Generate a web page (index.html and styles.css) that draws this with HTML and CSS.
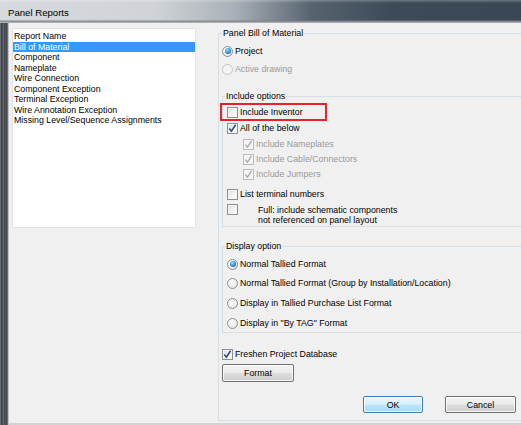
FILE: index.html
```html
<!DOCTYPE html>
<html>
<head>
<meta charset="utf-8">
<title>Panel Reports</title>
<link rel="stylesheet" href="styles.css">
</head>
<body>
<div class="window">
  <div class="titlebar"><span class="title">Panel Reports</span></div>
  <div class="frame">
    <div class="frame-left"></div>
    <div class="client">
      <div class="listbox">
        <div class="list-header">Report Name</div>
        <div class="item selected">Bill of Material</div>
        <div class="item">Component</div>
        <div class="item">Nameplate</div>
        <div class="item">Wire Connection</div>
        <div class="item">Component Exception</div>
        <div class="item">Terminal Exception</div>
        <div class="item">Wire Annotation Exception</div>
        <div class="item">Missing Level/Sequence Assignments</div>
      </div>

      <fieldset class="group outer">
        <legend>Panel Bill of Material</legend>
        <div class="row r-project"><span class="radio on"></span><span>Project</span></div>
        <div class="row r-active disabled"><span class="radio"></span><span>Active drawing</span></div>

        <fieldset class="group include">
          <legend>Include options</legend>
          <div class="row r-inventor"><span class="cb"></span><span>Include Inventor</span></div>
          <div class="row r-all"><span class="cb checked"><svg viewBox="0 0 11 11" width="11" height="11"><path d="M2.3 5.6 L4.4 8.2 L8.6 1.8" fill="none" stroke="#334a86" stroke-width="1.6"/></svg></span><span>All of the below</span></div>
          <div class="row sub sub-first disabled"><span class="cb checked dis"><svg viewBox="0 0 11 11" width="11" height="11"><path d="M2.3 5.6 L4.4 8.2 L8.6 1.8" fill="none" stroke="#a9a9a9" stroke-width="1.3"/></svg></span><span>Include Nameplates</span></div>
          <div class="row sub disabled"><span class="cb checked dis"><svg viewBox="0 0 11 11" width="11" height="11"><path d="M2.3 5.6 L4.4 8.2 L8.6 1.8" fill="none" stroke="#a9a9a9" stroke-width="1.3"/></svg></span><span>Include Cable/Connectors</span></div>
          <div class="row sub disabled"><span class="cb checked dis"><svg viewBox="0 0 11 11" width="11" height="11"><path d="M2.3 5.6 L4.4 8.2 L8.6 1.8" fill="none" stroke="#a9a9a9" stroke-width="1.3"/></svg></span><span>Include Jumpers</span></div>
          <div class="row r-list"><span class="cb"></span><span>List terminal numbers</span></div>
          <div class="row r-full"><span class="cb"></span><span class="full-text">Full: include schematic components<br>not referenced on panel layout</span></div>
        </fieldset>

        <fieldset class="group display">
          <legend>Display option</legend>
          <div class="row r-disp r-disp-first"><span class="radio on"></span><span>Normal Tallied Format</span></div>
          <div class="row r-disp"><span class="radio"></span><span>Normal Tallied Format (Group by Installation/Location)</span></div>
          <div class="row r-disp r-disp-b"><span class="radio"></span><span>Display in Tallied Purchase List Format</span></div>
          <div class="row r-disp r-disp-b"><span class="radio"></span><span>Display in "By TAG" Format</span></div>
        </fieldset>

        <div class="row r-freshen"><span class="cb checked"><svg viewBox="0 0 11 11" width="11" height="11"><path d="M2.3 5.6 L4.4 8.2 L8.6 1.8" fill="none" stroke="#334a86" stroke-width="1.6"/></svg></span><span>Freshen Project Database</span></div>
        <button class="btn format">Format</button>
        <div class="actions">
          <button class="btn ok">OK</button>
          <button class="btn cancel">Cancel</button>
        </div>
      </fieldset>
    </div>
  </div>
</div>
</body>
</html>
```
FILE: styles.css
```css
* { box-sizing: border-box; }
html, body { margin: 0; padding: 0; }
body {
  width: 521px;
  height: 425px;
  overflow: hidden;
  background: #f0f0f0;
  font-family: "Liberation Sans", Arial, sans-serif;
  font-size: 8.8px;
  color: #000;
}
.window {
  width: 521px;
  height: 425px;
  display: flex;
  flex-direction: column;
  overflow: hidden;
  background: #6b7580;
}
.titlebar {
  height: 23px;
  flex: none;
  display: flex;
  align-items: center;
  padding-left: 8px;
  background:
    linear-gradient(to bottom, rgba(255,255,255,0.25) 0, rgba(255,255,255,0) 3px, rgba(0,0,0,0) 20px, rgba(120,125,130,0.9) 21px, #b9bec3 23px),
    linear-gradient(to right, #d7dadd 0, #cfd3d7 30%, #a9b0b7 45%, #56636f 60%, #3d4b59 75%, #3a4856 100%);
}
.title {
  font-family: "Liberation Sans", Arial, sans-serif;
  font-size: 9.6px;
  color: #000;
  margin-top: 1px;
}
.frame {
  flex: 1;
  display: flex;
  min-height: 0;
}
.frame-left {
  width: 9px;
  flex: none;
  background: linear-gradient(to right, #8d9197 0, #4a4f55 1px, #2f3338 2px, #6c7178 3px, #3b3f44 5px, #5d6268 6px, #2c3035 7px, #a6aab0 8px, #d7d9db 9px);
}
.client {
  flex: 1;
  display: flex;
  align-items: flex-start;
  background: #f0f0f0;
  border-bottom: 2px solid #d0d2d4;
  min-width: 0;
  overflow: hidden;
}

/* list box */
.listbox {
  flex: none;
  width: 184px;
  height: 200px;
  margin: 5px 0 0 3px;
  background: #fff;
  border: 1px solid #e1e4e7;
  padding-top: 1px;
}
.list-header, .item {
  height: 10.5px;
  line-height: 10.5px;
  padding-left: 1px;
  white-space: nowrap;
}
.list-header { height: 11.5px; line-height: 12px; }
.item.selected { background: #3399ff; color: #fff; }

/* group boxes */
.group {
  margin: 0;
  padding: 0;
  min-width: 0;
  border: 1px solid #d5dfe5;
  border-right: none;
}
.group legend {
  padding: 0 1px;
  line-height: 12px;
  height: 12px;
  font-size: 8.8px;
  white-space: nowrap;
}
.outer {
  flex: none;
  width: 330px;
  margin: 4px 0 0 22px;
  padding-bottom: 7px;
}
.outer > legend { margin-left: 3px; }
.include, .display {
  margin-left: 3px;
  width: 320px;
}
.include > legend, .display > legend { margin-left: 2px; }

.row {
  display: flex;
  align-items: center;
  height: 12px;
  white-space: nowrap;
}
.row .radio, .row .cb { margin-right: 2px; }
.disabled { color: #9a9a9a; }

.r-project { margin: 6px 0 0 3px; }
.r-active { margin: 6px 0 0 3px; }

.include { margin-top: 15px; padding-bottom: 1px; }
.r-inventor {
  margin: 4px 0 0 0;
  width: 101px;
  padding-left: 4px;
  outline: 2px solid #e3242b;
  outline-offset: 1px;
}
.r-all { margin: 4px 0 0 4px; }
.sub { margin: 3px 0 0 20px; }
.sub-first { margin-top: 4px; }
.r-list { margin: 8px 0 0 4px; }
.r-full {
  margin: 4px 0 0 4px;
  height: auto;
  align-items: flex-start;
}
.full-text {
  margin-left: 18px;
  margin-top: 1px;
  line-height: 10px;
}

.display { margin-top: 13px; padding-bottom: 3px; }
.r-disp { margin: 7px 0 0 4px; }
.r-disp-first { margin-top: 6px; }
.r-disp-b { margin-top: 8px; }

.r-freshen { margin: 15px 0 0 3px; }

/* checkbox / radio */
.cb {
  width: 11px;
  height: 11px;
  flex: none;
  border: 1px solid #8e8f8f;
  background: linear-gradient(135deg, #dcdcdc 0, #f4f4f4 60%, #fdfdfd 100%);
  box-shadow: inset 0 0 0 1px #f4f4f4;
  display: block;
}
.cb svg { display: block; margin: -1px 0 0 -1px; }
.cb.dis { border-color: #bcbcbc; background: #f4f4f4; }
.radio {
  width: 11px;
  height: 11px;
  flex: none;
  border-radius: 50%;
  border: 1px solid #8e8f8f;
  background: radial-gradient(circle at 35% 35%, #ffffff 0, #e8e8e8 70%, #d5d5d5 100%);
  display: flex;
  align-items: center;
  justify-content: center;
}
.radio.on::after {
  content: "";
  width: 6px;
  height: 6px;
  border-radius: 50%;
  background: radial-gradient(circle at 40% 35%, #9fe3ff 0, #2a8ad4 55%, #0c4f96 100%);
}
.disabled .radio { border-color: #c5c5c5; background: #f4f4f4; }

/* buttons */
.btn {
  display: block;
  font-family: "Liberation Sans", Arial, sans-serif;
  font-size: 8.8px;
  color: #000;
  padding: 0;
  border: 1px solid #707070;
  border-radius: 2px;
  background: linear-gradient(to bottom, #f3f3f3 0, #ebebeb 48%, #dddddd 52%, #cfcfcf 100%);
  box-shadow: inset 0 0 0 1px rgba(255,255,255,0.8);
}
.format {
  width: 72px;
  height: 18px;
  margin: 4px 0 0 3px;
}
.actions {
  display: flex;
  gap: 22px;
  margin: 14px 0 0 144px;
}
.ok {
  width: 60px;
  height: 17px;
  border-color: #3c7fb1;
  background: linear-gradient(to bottom, #eaf6fd 0, #d9f0fc 48%, #bee6fd 52%, #a7d9f5 100%);
}
.cancel {
  width: 71px;
  height: 17px;
}
```
